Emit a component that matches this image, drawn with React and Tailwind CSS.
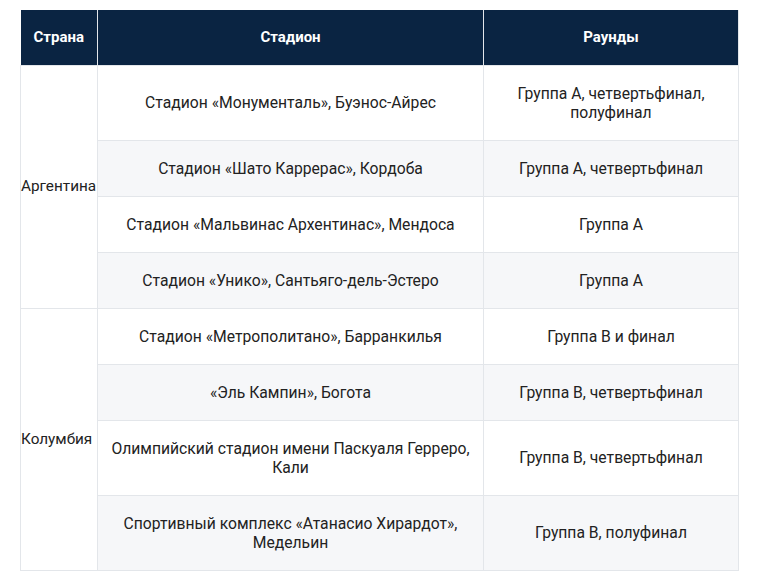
const rows = [
  { country: 'Аргентина', span: 4, stadium: ['Стадион «Монументаль», Буэнос-Айрес'], rounds: ['Группа А, четвертьфинал,', 'полуфинал'] },
  { stadium: ['Стадион «Шато Каррерас», Кордоба'], rounds: ['Группа А, четвертьфинал'] },
  { stadium: ['Стадион «Мальвинас Архентинас», Мендоса'], rounds: ['Группа А'] },
  { stadium: ['Стадион «Унико», Сантьяго-дель-Эстеро'], rounds: ['Группа А'] },
  { country: 'Колумбия', span: 4, stadium: ['Стадион «Метрополитано», Барранкилья'], rounds: ['Группа B и финал'] },
  { stadium: ['«Эль Кампин», Богота'], rounds: ['Группа B, четвертьфинал'] },
  { stadium: ['Олимпийский стадион имени Паскуаля Герреро,', 'Кали'], rounds: ['Группа B, четвертьфинал'] },
  { stadium: ['Спортивный комплекс «Атанасио Хирардот»,', 'Медельин'], rounds: ['Группа B, полуфинал'] },
];

function Lines({ lines }) {
  return lines.map((l, i) => (
    <span key={i}>
      {l}
      {i < lines.length - 1 && <br />}
    </span>
  ));
}

export default function App() {
  return (
    <div className="bg-white w-[762px] h-[588px] pt-[10px] pl-[20px] font-['Roboto',sans-serif] text-[15.7px] leading-[19px] text-[#222]">
      <table className="table-fixed border-collapse w-[718px]">
        <colgroup>
          <col className="w-[77px]" />
          <col className="w-[386px]" />
          <col className="w-[255px]" />
        </colgroup>
        <thead>
          <tr className="bg-[#0a2442] text-white font-bold text-[15px] h-[55px]">
            <th className="border-r border-[#e3e6ea] px-0">Страна</th>
            <th className="border-r border-[#e3e6ea]">Стадион</th>
            <th className="border-r border-[#e3e6ea]">Раунды</th>
          </tr>
        </thead>
        <tbody>
          {rows.map((r, i) => (
            <tr key={i} className={i % 2 === 1 ? 'bg-[#f6f7f9]' : 'bg-white'}>
              {r.country && (
                <td rowSpan={r.span} className="bg-white border border-[#e3e6ea] text-left text-[15.3px] px-0 whitespace-nowrap">
                  {r.country}
                </td>
              )}
              <td className={`border border-[#e3e6ea] text-center px-2 ${r.stadium.length > 1 || r.rounds.length > 1 ? 'h-[75px]' : 'h-[56px]'}`}>
                <Lines lines={r.stadium} />
              </td>
              <td className="border border-[#e3e6ea] text-center px-2">
                <Lines lines={r.rounds} />
              </td>
            </tr>
          ))}
        </tbody>
      </table>
    </div>
  );
}
